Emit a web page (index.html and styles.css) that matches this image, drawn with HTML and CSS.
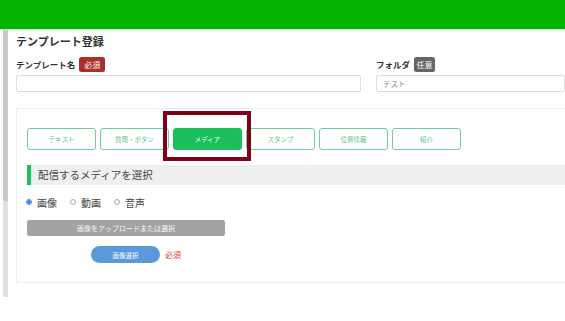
FILE: index.html
```html
<!DOCTYPE html>
<html lang="ja">
<head>
<meta charset="utf-8">
<link rel="stylesheet" href="styles.css">
</head>
<body>
<header class="topbar"></header>
<div class="page">
  <div class="rail"></div>
  <main class="main">
    <h1 class="title">テンプレート登録</h1>
    <div class="fields">
      <div class="field">
        <div class="label">テンプレート名 <span class="badge req">必須</span></div>
        <input class="input" type="text">
      </div>
      <div class="field">
        <div class="label">フォルダ <span class="badge opt">任意</span></div>
        <input class="input" type="text" placeholder="テスト">
      </div>
    </div>
    <section class="card">
      <div class="tabs">
        <button class="tab">テキスト</button>
        <button class="tab">質問・ボタン</button>
        <button class="tab active">メディア</button>
        <button class="tab">スタンプ</button>
        <button class="tab">位置情報</button>
        <button class="tab">紹介</button>
        <div class="highlight"></div>
      </div>
      <div class="sechead">配信するメディアを選択</div>
      <div class="radios">
        <label class="radio"><span class="dot on"></span>画像</label>
        <label class="radio"><span class="dot"></span>動画</label>
        <label class="radio"><span class="dot"></span>音声</label>
      </div>
      <div class="upload">画像をアップロードまたは選択</div>
      <div class="pickrow">
        <button class="pick">画像選択</button>
        <span class="reqtext">必須</span>
      </div>
    </section>
  </main>
</div>
</body>
</html>
```
FILE: styles.css
```css
* { box-sizing: border-box; }
html, body { margin: 0; padding: 0; background: #fff; overflow: hidden; }
body { font-family: "Noto Sans CJK JP", "Noto Sans", sans-serif; color: #333; width: 565px; height: 321px; }
.topbar { height: 30px; background: #00b400; border-bottom: 1px solid #b8f0b8; }
.page { display: flex; align-items: flex-start; }
.rail { width: 5px; height: 267px; margin-left: 3px; background: linear-gradient(#c9c9c9 0, #c9c9c9 171px, #e2e2e2 171px); }
.main { flex: 1; padding-left: 8px; min-width: 0; overflow: hidden; }
.title { margin: 3px 0 0; font-size: 11px; font-weight: bold; line-height: 16px; color: #333; }
.fields { display: grid; grid-template-columns: 345px 1fr; column-gap: 15px; margin-top: 8px; }
.label { font-size: 8.5px; font-weight: bold; line-height: 15px; height: 15px; display: flex; align-items: center; gap: 4px; color: #333; }
.badge { display: inline-block; font-size: 8px; font-weight: normal; color: #fff; line-height: 15px; height: 15px; border-radius: 2.5px; text-align: center; }
.req { background: #a9302b; width: 26px; }
.opt { background: #666; width: 21px; }
.input { display: block; width: 100%; height: 17px; margin-top: 3px; border: 1px solid #ddd; border-radius: 2px; font-family: inherit; font-size: 7.5px; padding: 0 6px; color: #888; }
.input::placeholder { color: #888; }
.card { margin-top: 16px; border: 1px solid #eee; border-right: none; height: 175px; padding: 19px 0 0 10px; }
.tabs { display: flex; gap: 4px; position: relative; }
.tab { width: 69px; height: 22px; border: 1.5px solid #6fcf94; border-radius: 3px; background: #fff; color: #5fbf84; font-family: inherit; font-size: 6.5px; padding: 0; }
.tab.active { background: #1cbf5b; border-color: #1cbf5b; color: #e8ffe8; }
.highlight { position: absolute; left: 136px; top: -17px; width: 88px; height: 50px; border: 4.5px solid #7c0018; }
.sechead { margin-top: 15px; height: 20px; background: #efefef; border-left: 4px solid #1cbf5b; padding-left: 7px; font-size: 10.5px; line-height: 20px; color: #444; }
.radios { display: flex; gap: 13px; margin-top: 10px; height: 14px; align-items: center; margin-left: -1px; }
.radio { display: flex; align-items: center; gap: 5px; font-size: 10px; color: #444; }
.dot { width: 6px; height: 6px; border-radius: 50%; border: 1px solid #aaa; }
.dot.on { border-color: #3a86e0; background: radial-gradient(#3a86e0 0 1.5px, #fff 2px); }
.upload { margin-top: 11px; width: 198px; height: 16px; background: #a3a3a3; border-radius: 2px; color: #f4f4f4; font-size: 7px; line-height: 16px; text-align: center; }
.pickrow { display: flex; align-items: center; gap: 5px; margin-top: 10px; padding-left: 64px; }
.pick { width: 69px; height: 17px; border: none; border-radius: 9px; background: #5b9ada; color: #fff; font-family: inherit; font-size: 6.5px; padding: 0; }
.reqtext { color: #e03a3a; font-size: 8px; }
```
